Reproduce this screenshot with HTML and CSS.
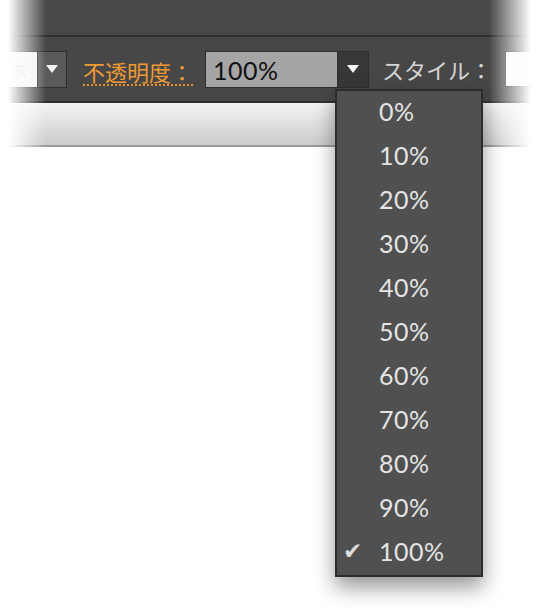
FILE: index.html
```html
<!DOCTYPE html>
<html>
<head>
    <meta charset="UTF-8">
    <title>不透明度</title>
    <link rel="stylesheet" href="styles.css">
</head>
<body>
    <div class="stage">
        <div class="top-band"></div>
        <div class="control-bar">
            <div class="combo brush">
                <span class="field">本</span>
                <span class="drop-btn light">
                    <svg width="12" height="8" viewBox="0 0 12 8"><polygon points="0,0 12,0 6,8" fill="#f2f2f2"/></svg>
                </span>
            </div>
            <span class="label opacity-label">不透明度：</span>
            <div class="combo opacity">
                <span class="field">100%</span>
                <span class="drop-btn dark">
                    <svg width="12" height="8" viewBox="0 0 12 8"><polygon points="0,0 12,0 6,8" fill="#f2f2f2"/></svg>
                </span>
                <ul class="menu">
                    <li>0%</li>
                    <li>10%</li>
                    <li>20%</li>
                    <li>30%</li>
                    <li>40%</li>
                    <li>50%</li>
                    <li>60%</li>
                    <li>70%</li>
                    <li>80%</li>
                    <li>90%</li>
                    <li class="checked"><span class="check">✔</span>100%</li>
                </ul>
            </div>
            <span class="label style-label">スタイル：</span>
            <div class="style-box"></div>
        </div>
        <div class="sub-band"></div>
        <div class="fade fade-left"></div>
        <div class="fade fade-right"></div>
    </div>
</body>
</html>
```

FILE: styles.css
```css
body {
    margin: 0;
    background: #fff;
    font-family: 'Lato', 'Noto Sans CJK JP', sans-serif;
}
.stage {
    position: relative;
    width: 545px;
    height: 608px;
    overflow: hidden;
}
.top-band {
    height: 35px;
    background: #484848;
    border-bottom: 2px solid #2e2e2e;
}
.control-bar {
    height: 64px;
    background: #474747;
    border-bottom: 2px solid #2f2f2f;
    display: flex;
    align-items: center;
}
.control-bar > * {
    flex-shrink: 0;
    white-space: nowrap;
}
.combo {
    display: flex;
    height: 37px;
    box-sizing: border-box;
    border: 1px solid #2f2f2f;
}
.combo .field {
    display: flex;
    align-items: center;
    box-sizing: border-box;
}
.drop-btn {
    display: flex;
    align-items: center;
    justify-content: center;
    width: 29px;
    border-left: 1px solid #2f2f2f;
}
.drop-btn.light {
    background: #5a5a5a;
}
.drop-btn.dark {
    background: #373737;
}
.brush {
    width: 67px;
    border-left: none;
}
.brush .field {
    width: 37px;
    background: #f4f4f4;
    color: #d8d8d8;
    font-size: 19px;
    padding-left: 8px;
}
.label {
    font-size: 22px;
    line-height: 30px;
    font-family: 'Noto Sans CJK JP', sans-serif;
}
.opacity-label {
    margin-left: 16px;
    color: #f09a33;
    border-bottom: 2px dotted #e8922a;
    line-height: 26px;
    padding-top: 2px;
    margin-top: 4px;
}
.opacity {
    position: relative;
    width: 164px;
    margin-left: 12px;
}
.opacity .field {
    flex: 1;
    background: #a5a5a5;
    color: #111;
    font-size: 25px;
    padding-left: 7px;
    padding-top: 2px;
    letter-spacing: 0.5px;
}
.opacity .drop-btn {
    width: 30px;
}
.menu {
    position: absolute;
    left: 129px;
    top: 37px;
    width: 148px;
    box-sizing: border-box;
    margin: 0;
    padding: 0;
    list-style: none;
    background: #505050;
    border: 2px solid #2c2c2c;
    box-shadow: 0 10px 20px rgba(0, 0, 0, 0.42);
    z-index: 5;
}
.menu li {
    position: relative;
    height: 44px;
    line-height: 40px;
    padding-left: 42px;
    color: #e4e4e4;
    font-size: 25px;
    letter-spacing: 0.5px;
}
.menu .check {
    position: absolute;
    left: 6px;
    top: 0;
    font-family: 'DejaVu Sans', sans-serif;
    font-size: 23px;
    color: #dcdcdc;
}
.style-label {
    margin-left: 13px;
    color: #d6d6d6;
}
.style-box {
    margin-left: 13px;
    width: 60px;
    height: 36px;
    box-sizing: border-box;
    background: #fafafa;
    border: 1px solid #2f2f2f;
}
.sub-band {
    height: 42px;
    background: linear-gradient(#f4f4f4, #cbcbcb);
    border-bottom: 2px solid #9a9a9a;
}
.fade {
    position: absolute;
    top: 0;
    height: 148px;
    z-index: 3;
}
.fade-left {
    left: 0;
    width: 46px;
    background: linear-gradient(to right, #fff 8px, rgba(255, 255, 255, 0));
}
.fade-right {
    right: 0;
    width: 56px;
    background: linear-gradient(to left, #fff 14px, rgba(255, 255, 255, 0));
}
```
